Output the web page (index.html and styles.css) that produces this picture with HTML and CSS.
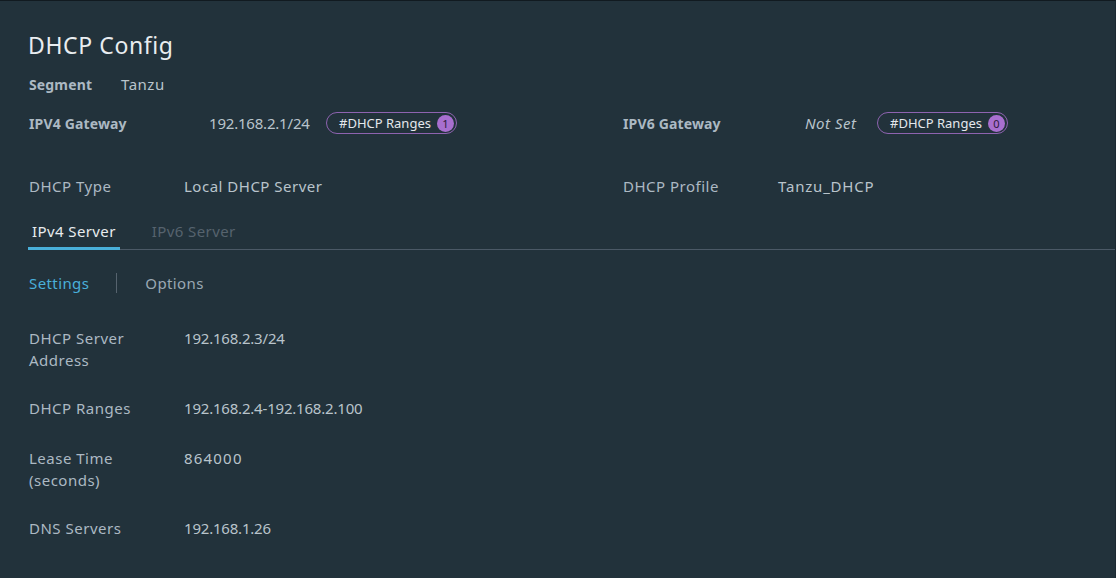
FILE: index.html
```html
<!DOCTYPE html>
<html>
<head>
<meta charset="utf-8">
<link rel="stylesheet" href="styles.css">
</head>
<body>
<div class="page">
  <h1 class="title">DHCP Config</h1>
  <div class="seg-row">
    <span class="lbl-b seg-lbl">Segment</span>
    <span class="val">Tanzu</span>
  </div>
  <div class="grid-row gw-row">
    <div class="cell">
      <span class="lbl-b gw-lbl">IPV4 Gateway</span>
      <span class="val num gw-val">192.168.2.1/24</span>
      <span class="badge">#DHCP Ranges <span class="count">1</span></span>
    </div>
    <div class="cell">
      <span class="lbl-b gw6-lbl">IPV6 Gateway</span>
      <span class="val gw6-val italic">Not Set</span>
      <span class="badge">#DHCP Ranges <span class="count">0</span></span>
    </div>
  </div>
  <div class="grid-row type-row">
    <div class="cell">
      <span class="lbl type-lbl">DHCP Type</span>
      <span class="val">Local DHCP Server</span>
    </div>
    <div class="cell">
      <span class="lbl prof-lbl">DHCP Profile</span>
      <span class="val wide">Tanzu_DHCP</span>
    </div>
  </div>
  <div class="tabs">
    <div class="tab active">IPv4 Server</div>
    <div class="tab disabled">IPv6 Server</div>
  </div>
  <div class="subnav">
    <span class="sub active">Settings</span>
    <span class="sep"></span>
    <span class="sub">Options</span>
  </div>
  <div class="details">
    <div class="drow"><div class="dlbl">DHCP Server<br>Address</div><div class="dval num">192.168.2.3/24</div></div>
    <div class="drow"><div class="dlbl">DHCP Ranges</div><div class="dval num">192.168.2.4-192.168.2.100</div></div>
    <div class="drow"><div class="dlbl">Lease Time<br>(seconds)</div><div class="dval zeros">864000</div></div>
    <div class="drow"><div class="dlbl">DNS Servers</div><div class="dval num">192.168.1.26</div></div>
  </div>
</div>
</body>
</html>
```
FILE: styles.css
```css
html, body {
  margin: 0;
  padding: 0;
  background: #22323b;
}
body {
  font-family: "Noto Sans", "Open Sans", sans-serif;
  color: #b9c4cb;
  font-size: 15px;
  letter-spacing: 0.5px;
  height: 578px;
  overflow: hidden;
}
.page {
  border-top: 1px solid #111a20;
  border-right: 1px solid #1c2a33;
  height: 577px;
  padding: 0 0 0 28px;
}
.title {
  margin: 30px 0 0 0;
  font-size: 23px;
  font-weight: 400;
  line-height: 28px;
  color: #e9edf0;
  letter-spacing: 0.6px;
}
.lbl-b {
  font-weight: 700;
  color: #acb9c3;
  font-size: 14px;
  letter-spacing: 0.15px;
}
.lbl { color: #acb9c3; }
.val { color: #b9c4cb; }
.num { letter-spacing: -0.2px; }
.zeros { letter-spacing: 1.2px; }
.wide { letter-spacing: 0.8px; }
.italic { font-style: italic; }
.seg-row {
  display: flex;
  align-items: center;
  height: 22px;
  margin-top: 14px;
  padding-left: 1px;
}
.seg-lbl { width: 92px; }
.grid-row {
  display: grid;
  grid-template-columns: 594px 1fr;
  padding-left: 1px;
}
.cell {
  display: flex;
  align-items: center;
}
.gw-row { margin-top: 16px; height: 24px; }
.gw-lbl { width: 180px; }
.gw-val { width: 117px; }
.gw6-lbl { width: 182px; }
.gw6-val { width: 72px; }
.badge {
  display: inline-flex;
  align-items: center;
  height: 20px;
  border: 1px solid #8e63b0;
  border-radius: 12px;
  padding: 0 2px 0 12px;
  color: #e4e8ec;
  font-size: 13px;
  letter-spacing: 0;
  gap: 6px;
}
.count {
  width: 17px;
  height: 17px;
  border-radius: 50%;
  background: #a86fcf;
  color: #2c1a3a;
  font-size: 11px;
  display: inline-flex;
  align-items: center;
  justify-content: center;
}
.type-row { margin-top: 40px; height: 22px; }
.type-lbl { width: 155px; }
.prof-lbl { width: 155px; }
.tabs {
  display: flex;
  margin-top: 23px;
  border-bottom: 1px solid #4b5966;
  gap: 28px;
}
.tab {
  height: 29px;
  line-height: 22px;
  padding: 0 4px;
  box-sizing: border-box;
  letter-spacing: 0.4px;
}
.tab.active {
  color: #e8ecef;
  border-bottom: 3px solid #49afd9;
  margin-bottom: -1px;
  height: 30px;
}
.tab.disabled { color: #56636e; }
.subnav {
  display: flex;
  align-items: center;
  margin-top: 22px;
  height: 22px;
  padding-left: 1px;
  letter-spacing: 0.4px;
}
.sub { color: #9aa8b3; }
.sub.active { color: #49afd9; }
.sep {
  width: 1px;
  height: 20px;
  background: #56636e;
  margin: 0 28px 0 27px;
}
.details {
  margin-top: 33px;
  padding-left: 1px;
}
.drow {
  display: flex;
  line-height: 22px;
  min-height: 24px;
  margin-bottom: 26px;
}
.dlbl { width: 155px; color: #acb9c3; }
.dval { color: #b9c4cb; }
```
